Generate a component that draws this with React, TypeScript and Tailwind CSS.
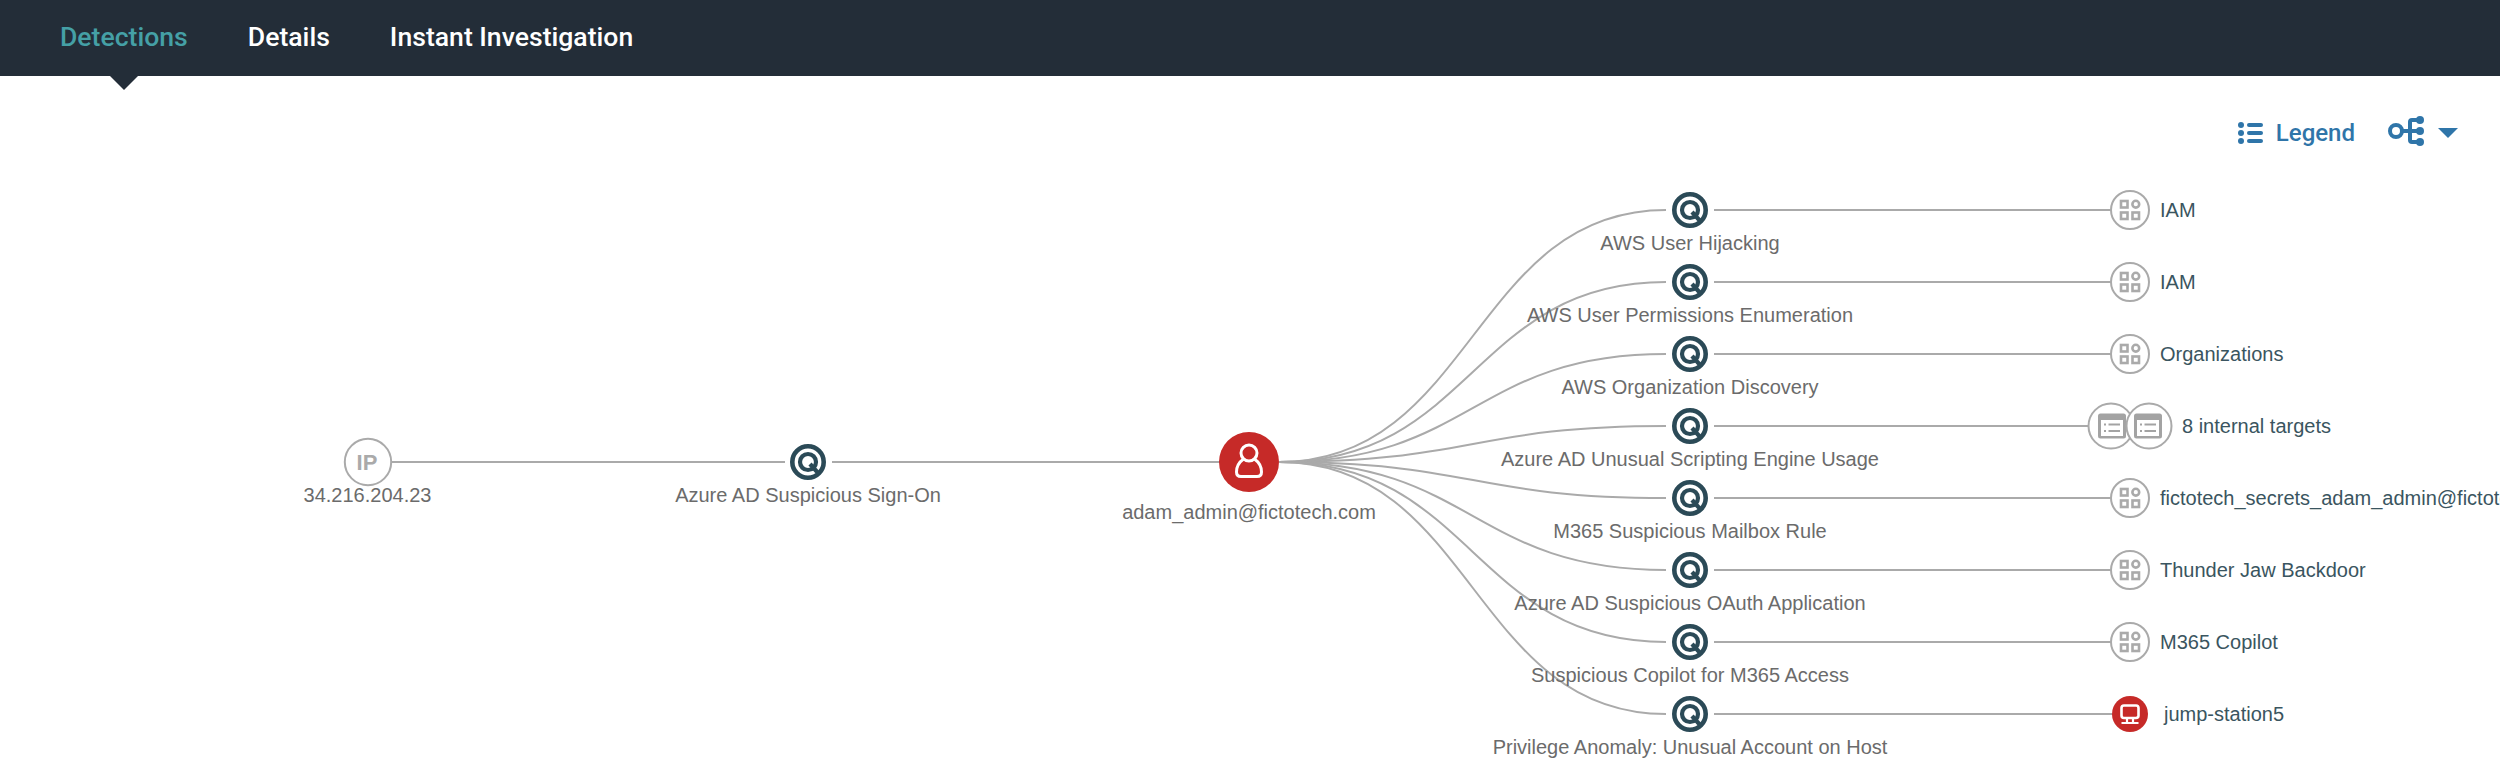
const rowY = [210, 282, 354, 426, 498, 570, 642, 714];

const detections = [
  'AWS User Hijacking',
  'AWS User Permissions Enumeration',
  'AWS Organization Discovery',
  'Azure AD Unusual Scripting Engine Usage',
  'M365 Suspicious Mailbox Rule',
  'Azure AD Suspicious OAuth Application',
  'Suspicious Copilot for M365 Access',
  'Privilege Anomaly: Unusual Account on Host',
];

const targets = [
  { label: 'IAM', kind: 'app' },
  { label: 'IAM', kind: 'app' },
  { label: 'Organizations', kind: 'app' },
  { label: '8 internal targets', kind: 'group' },
  { label: 'fictotech_secrets_adam_admin@fictotech.com', kind: 'app' },
  { label: 'Thunder Jaw Backdoor', kind: 'app' },
  { label: 'M365 Copilot', kind: 'app' },
  { label: 'jump-station5', kind: 'host' },
];

// Diagram is 76px below the page top because of the nav bar
const NAV = 76;

function QIcon({ x, y }: { x: number; y: number }) {
  return (
    <g transform={`translate(${x} ${y})`} fill="none" stroke="#2b4a57">
      <circle r="15.7" strokeWidth="4.6" />
      <circle r="8" strokeWidth="4.2" />
      <path d="M2 2 L11.5 12.5" strokeWidth="4.2" />
    </g>
  );
}

function AppIcon({ x, y }: { x: number; y: number }) {
  return (
    <g transform={`translate(${x} ${y})`}>
      <circle r="19" fill="#fff" stroke="#aaaaaa" strokeWidth="2" />
      <g fill="none" stroke="#aaaaaa" strokeWidth="2.6">
        <rect x="-9" y="-9" width="6.5" height="6.5" />
        <circle cx="5.8" cy="-5.8" r="3.4" />
        <rect x="-9" y="2.5" width="6.5" height="6.5" />
        <rect x="2.5" y="2.5" width="6.5" height="6.5" />
      </g>
    </g>
  );
}

function WindowIcon({ x, y, cx }: { x: number; y: number; cx: number }) {
  return (
    <g transform={`translate(${x} ${y})`}>
      <circle cx={cx} r="22.5" fill="#fff" stroke="#aaaaaa" strokeWidth="2" />
      <rect x="-14" y="-12.5" width="28" height="25" rx="2.5" fill="#a3a3a3" />
      <rect x="-11" y="-6" width="22" height="16" fill="#fff" />
      <g stroke="#a3a3a3" strokeWidth="2">
        <path d="M-8 -1.5 H-6 M-3.5 -1.5 H8" />
        <path d="M-8 5 H-6 M-3.5 5 H8" />
      </g>
    </g>
  );
}

function HostIcon({ x, y }: { x: number; y: number }) {
  return (
    <g transform={`translate(${x} ${y})`}>
      <circle r="18" fill="#c62a28" />
      <rect x="-8.5" y="-8.5" width="17" height="12.5" rx="2.5" fill="none" stroke="#fff" strokeWidth="2.6" />
      <path d="M-3 5 V8.5 M3 5 V8.5 M-8.5 9 H8.5" fill="none" stroke="#fff" strokeWidth="2.2" />
    </g>
  );
}

function Graph() {
  return (
    <svg className="absolute left-0 top-0" width="2500" height="702" viewBox={`0 ${NAV} 2500 702`}>
      <g fill="none" stroke="#aaaaaa" strokeWidth="2">
        <path d="M392 462 H785" />
        <path d="M832 462 H1220" />
        {rowY.map((y) => (
          <path key={`c${y}`} d={`M1279 462 C1473 462 1473 ${y} 1666 ${y}`} />
        ))}
        {rowY.map((y, i) => (
          <path key={`r${y}`} d={`M1714 ${y} H${targets[i].kind === 'group' ? 2088 : 2112}`} />
        ))}
      </g>

      {/* IP node */}
      <circle cx="368" cy="462" r="23.2" fill="#fff" stroke="#aaaaaa" strokeWidth="2" />

      <QIcon x={808} y={462} />

      {/* user node */}
      <circle cx="1249" cy="462" r="30" fill="#c62a28" />
      <g fill="none" stroke="#fff" strokeWidth="3">
        <circle cx="1249" cy="453" r="8" />
        <path d="M1243.5 459 C1238 463 1236.5 468 1236.5 472 C1236.5 475 1238 476.5 1241 476.5 H1257 C1260 476.5 1261.5 475 1261.5 472 C1261.5 468 1260 463 1254.5 459" />
      </g>

      {rowY.map((y) => (
        <QIcon key={y} x={1690} y={y} />
      ))}

      {rowY.map((y, i) => {
        const kind = targets[i].kind;
        if (kind === 'group') {
          return (
            <g key={y}>
              <WindowIcon x={2112} y={y} cx={-1} />
              <WindowIcon x={2148} y={y} cx={1} />
            </g>
          );
        }
        if (kind === 'host') return <HostIcon key={y} x={2130} y={y} />;
        return <AppIcon key={y} x={2130} y={y} />;
      })}
    </svg>
  );
}

function NodeLabel({ x, y, text }: { x: number; y: number; text: string }) {
  return (
    <div
      className="absolute -translate-x-1/2 -translate-y-1/2 whitespace-nowrap text-[20px] leading-6 text-[#6b6b6b]"
      style={{ left: x, top: y - NAV }}
    >
      {text}
    </div>
  );
}

function TargetLabel({ x, y, text }: { x: number; y: number; text: string }) {
  return (
    <div
      className="absolute -translate-y-1/2 whitespace-nowrap text-[20px] leading-6 text-[#3a5560]"
      style={{ left: x, top: y - NAV }}
    >
      {text}
    </div>
  );
}

export default function App() {
  return (
    <div className="h-[778px] w-[2500px] overflow-hidden bg-white font-['Liberation_Sans',Arial,sans-serif]">
      {/* Tabs */}
      <nav className="relative flex h-[76px] items-center gap-[60px] bg-[#232d38] pb-[3px] pl-[60px] font-['Roboto',sans-serif] text-[26.6px] font-medium text-white">
        <span className="text-[#45a0a6]">Detections</span>
        <span>Details</span>
        <span>Instant Investigation</span>
        <span className="absolute left-[110px] top-[76px] h-0 w-0 border-x-[14px] border-t-[14px] border-x-transparent border-t-[#232d38]" />
      </nav>

      <div className="relative h-[702px]">
        <Graph />

        {/* Toolbar */}
        <div className="absolute right-[42px] top-[39px] flex items-center font-['Roboto',sans-serif] text-[24px] font-medium text-[#2f75a9]">
          <svg width="26" height="24" viewBox="0 0 26 24" fill="#2f75a9">
            <circle cx="3" cy="4" r="3" />
            <circle cx="3" cy="12" r="3" />
            <circle cx="3" cy="20" r="3" />
            <rect x="9" y="2" width="16" height="4" rx="2" />
            <rect x="9" y="10" width="16" height="4" rx="2" />
            <rect x="9" y="18" width="16" height="4" rx="2" />
          </svg>
          <span className="ml-[12px]">Legend</span>
          <svg className="ml-[32px]" width="38" height="34" viewBox="0 0 38 34" fill="none" stroke="#2f75a9">
            <circle cx="9" cy="15" r="6" strokeWidth="4" />
            <path d="M15 15 H33 M33 4 H25 Q23 4 23 6 V24 Q23 26 25 26 H33" strokeWidth="4" />
            <g fill="#2f75a9" stroke="none">
              <circle cx="33" cy="4" r="4" />
              <circle cx="33" cy="15" r="4" />
              <circle cx="33" cy="26" r="4" />
            </g>
          </svg>
          <span className="ml-[13px] h-0 w-0 border-x-[10px] border-t-[10px] border-x-transparent border-t-[#2f75a9]" />
        </div>

        <div className="absolute -translate-x-1/2 -translate-y-1/2 text-[22px] font-bold text-[#aaaaaa]" style={{ left: 367, top: 462 - NAV }}>
          IP
        </div>

        <NodeLabel x={367.5} y={495} text="34.216.204.23" />
        <NodeLabel x={808} y={495} text="Azure AD Suspicious Sign-On" />
        <NodeLabel x={1249} y={512} text="adam_admin@fictotech.com" />

        {detections.map((text, i) => (
          <NodeLabel key={text} x={1690} y={rowY[i] + 33} text={text} />
        ))}

        {targets.map((t, i) => (
          <TargetLabel
            key={i}
            x={t.kind === 'group' ? 2182 : t.kind === 'host' ? 2164 : 2160}
            y={rowY[i] - 0.5}
            text={t.label}
          />
        ))}
      </div>
    </div>
  );
}
